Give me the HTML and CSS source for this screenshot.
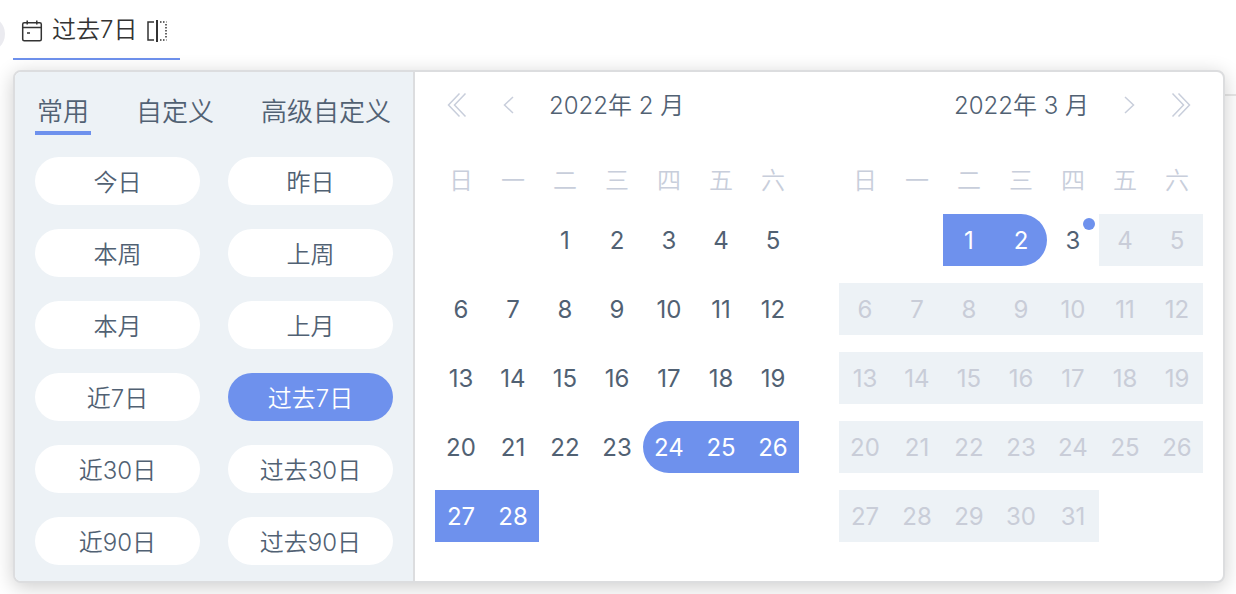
FILE: index.html
```html
<!DOCTYPE html>
<html lang="zh-CN">
<head>
    <meta charset="UTF-8">
    <meta name="viewport" content="width=device-width, initial-scale=1.0">
    <title>日期选择</title>
    <link rel="stylesheet" href="styles.css">
</head>
<body>
    <span class="page-dot"></span>
    <span class="page-line"></span>

    <!-- Trigger -->
    <button class="trigger" type="button">
        <svg width="22" height="22" viewBox="0 0 22 22" fill="none" stroke="currentColor" stroke-width="1.5">
            <rect x="1.7" y="2.7" width="18.6" height="18" rx="1.5"/>
            <path d="M2 7.5h18M6.2 0.5v4M15.8 0.5v4M6 13h3"/>
        </svg>
        <span>过去7日</span>
        <svg width="22" height="24" viewBox="0 0 22 24" fill="none" stroke="currentColor" stroke-width="1.5">
            <path d="M8 3H2v18h6"/>
            <path d="M11 1v22" stroke-width="2"/>
            <path d="M14 3h6.5M14 21h6.5M20 5v15" stroke-dasharray="1.5 1.5"/>
        </svg>
    </button>

    <div class="panel">
        <!-- Shortcuts -->
        <div class="sidebar">
            <div class="tabs">
                <button class="tab active" type="button">常用</button>
                <button class="tab" type="button">自定义</button>
                <button class="tab" type="button">高级自定义</button>
            </div>
            <div class="shortcuts">
                <button class="shortcut" type="button">今日</button>
                <button class="shortcut" type="button">昨日</button>
                <button class="shortcut" type="button">本周</button>
                <button class="shortcut" type="button">上周</button>
                <button class="shortcut" type="button">本月</button>
                <button class="shortcut" type="button">上月</button>
                <button class="shortcut" type="button">近7日</button>
                <button class="shortcut selected" type="button">过去7日</button>
                <button class="shortcut" type="button">近30日</button>
                <button class="shortcut" type="button">过去30日</button>
                <button class="shortcut" type="button">近90日</button>
                <button class="shortcut" type="button">过去90日</button>
            </div>
        </div>

        <!-- Calendars -->
        <div class="calendars">
            <div class="calendar">
                <div class="calendar-header">
                    <button class="arrow" type="button" aria-label="上一年">
                        <svg width="20" height="26" viewBox="0 0 20 26"><path d="M12.5 1.5L1.5 13l11 11.5M18.5 1.5L7.5 13l11 11.5"/></svg>
                    </button>
                    <button class="arrow" type="button" aria-label="上个月">
                        <svg width="20" height="26" viewBox="0 0 20 26"><path d="M15 5l-8.5 8 8.5 8"/></svg>
                    </button>
                    <span class="month">2022年 2 月</span>
                </div>
                <table>
                    <thead>
                        <tr><th>日</th><th>一</th><th>二</th><th>三</th><th>四</th><th>五</th><th>六</th></tr>
                    </thead>
                    <tbody id="february"></tbody>
                </table>
            </div>
            <div class="calendar">
                <div class="calendar-header next">
                    <span class="month">2022年 3 月</span>
                    <button class="arrow" type="button" aria-label="下个月">
                        <svg width="20" height="26" viewBox="0 0 20 26"><path d="M5 5l8.5 8L5 21"/></svg>
                    </button>
                    <button class="arrow" type="button" aria-label="下一年">
                        <svg width="20" height="26" viewBox="0 0 20 26"><path d="M7.5 1.5l11 11.5-11 11.5M1.5 1.5l11 11.5-11 11.5"/></svg>
                    </button>
                </div>
                <table>
                    <thead>
                        <tr><th>日</th><th>一</th><th>二</th><th>三</th><th>四</th><th>五</th><th>六</th></tr>
                    </thead>
                    <tbody id="march"></tbody>
                </table>
            </div>
        </div>
    </div>

    <script src="script.js"></script>
</body>
</html>
```
FILE: styles.css
```css
/* Global styles */
* {
    box-sizing: border-box;
}

body {
    margin: 0;
    position: relative;
    overflow: hidden;
    background: #fff;
    color: #516173;
    font-family: Inter, "Noto Sans CJK SC", sans-serif;
    font-size: 24px;
    font-weight: 350;
}

button {
    margin: 0;
    padding: 0;
    border: none;
    background: none;
    color: inherit;
    font: inherit;
    cursor: pointer;
}

/* Parts of the page behind the picker */
.page-dot {
    position: absolute;
    top: 16px;
    left: -31px;
    width: 36px;
    height: 36px;
    border-radius: 50%;
    background: #ebebf0;
}

.page-line {
    position: absolute;
    top: 94px;
    right: 0;
    width: 20px;
    height: 2px;
    background: #e8e8e8;
}

/* Trigger */
.trigger {
    display: flex;
    align-items: center;
    gap: 9px;
    height: 60px;
    margin-left: 13px;
    padding: 3px 12px 0 8px;
    border-bottom: 2px solid #6e91ed;
    color: #333;
}

.trigger span {
    padding-bottom: 6px;
}

/* Panel */
.panel {
    position: relative;
    display: flex;
    margin: 10px 11px 20px 13px;
    border: 2px solid #dcdddf;
    border-radius: 8px;
    background: #fff;
    box-shadow: 0 4px 20px rgba(0, 0, 0, 0.2);
}

.sidebar {
    flex: 0 0 400px;
    padding: 20px 20px 16px;
    border-right: 2px solid #dcdddf;
    border-radius: 6px 0 0 6px;
    background: #edf2f6;
}

.tabs {
    display: flex;
    justify-content: space-between;
    margin-bottom: 22px;
}

.tab {
    height: 43px;
    padding: 0 2px;
    border-bottom: 4px solid transparent;
    font-size: 26px;
    line-height: 39px;
}

.tab.active {
    border-color: #6e91ed;
}

.shortcuts {
    display: grid;
    grid-template-columns: 1fr 1fr;
    gap: 24px 28px;
}

.shortcut {
    height: 48px;
    padding-bottom: 2px;
    border-radius: 24px;
    background: #fff;
}

.shortcut.selected {
    background: #6e91ed;
    color: #fff;
}

/* Calendars */
.calendars {
    flex: 1;
    display: flex;
    gap: 40px;
    padding: 12px 20px 0;
}

.calendar {
    flex: 1;
}

.calendar-header {
    display: flex;
    align-items: center;
    gap: 31px;
    height: 42px;
    margin-bottom: 22px;
    padding: 0 12px;
}

.calendar-header.next {
    justify-content: flex-end;
}

.month {
    padding-bottom: 4px;
}

.arrow {
    height: 26px;
}

.arrow svg {
    display: block;
    fill: none;
    stroke: #c8cedb;
    stroke-width: 1.5;
}

table {
    width: 100%;
    table-layout: fixed;
    border-collapse: collapse;
}

th {
    height: 66px;
    padding: 0 0 5px;
    color: #c8cedb;
    font-weight: 350;
}

td {
    padding: 0 0 17px;
}

.day {
    position: relative;
    display: block;
    width: 100%;
    height: 52px;
    font-weight: 400;
}

.day.in-range {
    background: #6e91ed;
    color: #fff;
}

.day.range-start {
    border-radius: 26px 0 0 26px;
}

.day.range-end {
    border-radius: 0 26px 26px 0;
}

.day:disabled {
    background: #edf2f6;
    color: #c9cdd8;
    cursor: default;
}

/* Today marker */
.day.today::after {
    content: "";
    position: absolute;
    top: 4px;
    right: 4px;
    width: 12px;
    height: 12px;
    border-radius: 50%;
    background: #6e91ed;
}
```
FILE: script.js
```js
const today = new Date(2022, 2, 3);
const rangeStart = new Date(2022, 1, 24);
const rangeEnd = new Date(2022, 2, 2);

function renderMonth(id, year, month) {
    const body = document.getElementById(id);
    const offset = new Date(year, month, 1).getDay();
    const total = new Date(year, month + 1, 0).getDate();
    let row;

    for (let i = 0; i < offset + total; i++) {
        if (i % 7 === 0) {
            row = body.insertRow();
        }
        const cell = row.insertCell();
        if (i < offset) {
            continue;
        }

        const date = new Date(year, month, i - offset + 1);
        const button = document.createElement('button');
        button.type = 'button';
        button.className = 'day';
        button.textContent = date.getDate();
        button.disabled = date > today;
        button.classList.toggle('in-range', date >= rangeStart && date <= rangeEnd);
        button.classList.toggle('range-start', +date === +rangeStart);
        button.classList.toggle('range-end', +date === +rangeEnd);
        button.classList.toggle('today', +date === +today);
        cell.appendChild(button);
    }
}

renderMonth('february', 2022, 1);
renderMonth('march', 2022, 2);
```
